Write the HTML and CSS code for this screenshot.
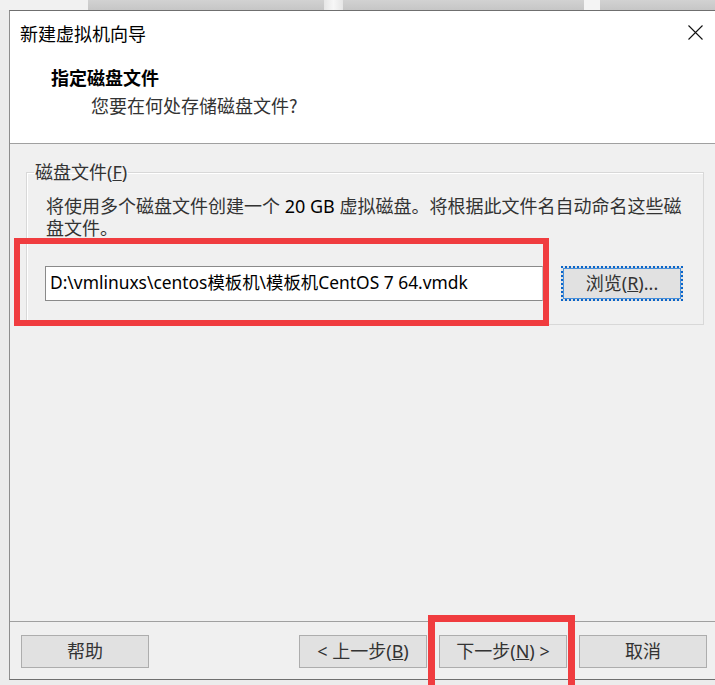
FILE: index.html
```html
<!DOCTYPE html>
<html lang="zh-CN">
<head>
<meta charset="utf-8">
<title>新建虚拟机向导</title>
<link rel="stylesheet" href="styles.css">
</head>
<body>
<div class="strip">
  <div class="seg seg-a"></div>
  <div class="seg seg-b"></div>
  <div class="seg seg-c"></div>
  <div class="seg seg-d"></div>
  <div class="seg seg-e"></div>
  <div class="seg seg-f"></div>
</div>
<div class="window">
  <div class="header">
    <div class="titlebar">
      <span class="title">新建虚拟机向导</span>
      <svg class="close" width="15" height="15" viewBox="0 0 15 15"><path d="M0.5 0.5 L14.5 14.5 M14.5 0.5 L0.5 14.5" stroke="#111" stroke-width="1.1" fill="none"/></svg>
    </div>
    <div class="heading">指定磁盘文件</div>
    <div class="subheading">您要在何处存储磁盘文件?</div>
  </div>
  <div class="content">
    <fieldset class="group">
      <legend class="group-label">磁盘文件(<u>F</u>)</legend>
      <p class="desc"><span class="line">将使用多个磁盘文件创建一个 <span class="lat">20 GB</span> 虚拟磁盘。将根据此文件名自动命名这些磁</span><br><span class="line">盘文件。</span></p>
      <div class="pathrow">
        <div class="path">D:\vmlinuxs\centos模板机\模板机CentOS 7 64.vmdk</div>
        <button class="btn browse">浏览(<u>R</u>)...</button>
      </div>
    </fieldset>
  </div>
  <div class="footer">
    <button class="btn">帮助</button>
    <div class="spacer"></div>
    <button class="btn">&lt; 上一步(<u>B</u>)</button>
    <button class="btn">下一步(<u>N</u>) &gt;</button>
    <button class="btn">取消</button>
  </div>
  <div class="mark mark-path"></div>
  <div class="mark mark-next"></div>
</div>
</body>
</html>
```
FILE: styles.css
```css
html, body {
  margin: 0;
  padding: 0;
}
body {
  width: 715px;
  height: 685px;
  overflow: hidden;
  background: #ececec;
  font-family: "Noto Sans", "Noto Sans CJK SC", sans-serif;
  color: #222;
}
.strip {
  display: flex;
  height: 10px;
}
.seg { height: 10px; box-sizing: border-box; }
.seg-a { width: 88px; background: #f1f1f1; }
.seg-b { width: 236px; background: linear-gradient(#d2d2d2, #c6c6c6); }
.seg-c { width: 19px; background: linear-gradient(90deg, #e6e6e6, #f7f7f7, #e6e6e6); }
.seg-d { width: 241px; background: linear-gradient(#d2d2d2, #c6c6c6); }
.seg-e { width: 16px; background: #f4f4f4; }
.seg-f { flex: 1; background: linear-gradient(#d2d2d2, #c6c6c6); }

.window {
  position: relative;
  margin-left: 9px;
  width: 708px;
  border-left: 1px solid #8e8e8e;
  border-top: 1px solid #6f6f6f;
  border-bottom: 1px solid #6f6f6f;
  background: #f0f0f0;
}
.header {
  height: 132px;
  background: #fff;
  border-bottom: 1px solid #a0a0a0;
}
.titlebar {
  height: 43px;
  display: flex;
  align-items: center;
  padding: 0 15px 0 10px;
}
.title {
  flex: 1;
  font-family: "Noto Sans CJK SC", sans-serif;
  font-size: 18px;
  line-height: 24px;
  color: #000;
}
.close { display: block; margin-top: 0; }
.heading {
  margin-top: 11px;
  padding-left: 41px;
  font-family: "Noto Sans CJK SC", sans-serif;
  font-weight: bold;
  font-size: 18px;
  line-height: 24px;
  color: #000;
}
.subheading {
  margin-top: 4px;
  padding-left: 81px;
  font-family: "Noto Sans CJK SC", sans-serif;
  font-size: 18px;
  line-height: 24px;
  color: #333;
}
.content {
  height: 478px;
  border-bottom: 1px solid #a0a0a0;
  padding-top: 17px;
  box-sizing: border-box;
}
.group {
  margin: 0 14px 0 16px;
  min-width: 0;
  border: 1px solid #d8d8d8;
  box-shadow: inset 1px 1px 0 #fff;
  padding: 12px 14px 23px 19px;
}
.group-label {
  margin-left: -12px;
  padding: 0 1px;
  font-size: 18px;
  line-height: 22px;
  color: #333;
}
.desc {
  margin: 0;
  font-size: 18px;
  line-height: 22px;
  color: #333;
}
.line { white-space: nowrap; }
.lat { color: #000; }
.pathrow {
  display: flex;
  margin-top: 27px;
  height: 35px;
}
.path {
  margin-left: -1px;
  width: 498px;
  box-sizing: border-box;
  border: 1px solid #8a8a8a;
  border-right-color: #c8c8c8;
  background: #fff;
  padding: 0 0 0 4px;
  font-size: 17.4px;
  line-height: 31px;
  color: #000;
  white-space: nowrap;
  overflow: hidden;
}
.btn {
  box-sizing: border-box;
  width: 128px;
  height: 33px;
  border: 1px solid #adadad;
  background: #e1e1e1;
  font-family: "Noto Sans", "Noto Sans CJK SC", sans-serif;
  font-size: 18px;
  line-height: 29px;
  color: #333;
  padding: 0;
}
.browse {
  margin-left: 18px;
  width: 122px;
  height: 35px;
  border: 2px dotted #0a64c8;
  box-shadow: inset 0 0 0 1px #4a90d9;
}
.footer {
  display: flex;
  gap: 12px;
  height: 57px;
  box-sizing: border-box;
  padding: 13px 11px 11px 11px;
}
.spacer { flex: 1; }
.mark {
  position: absolute;
  border: 6px solid #f03c3f;
  box-sizing: border-box;
}
.mark-path {
  left: 4px;
  top: 227px;
  width: 535px;
  height: 88px;
}
.mark-next {
  left: 418px;
  top: 604px;
  width: 147px;
  height: 90px;
  border-width: 7px;
}
```
